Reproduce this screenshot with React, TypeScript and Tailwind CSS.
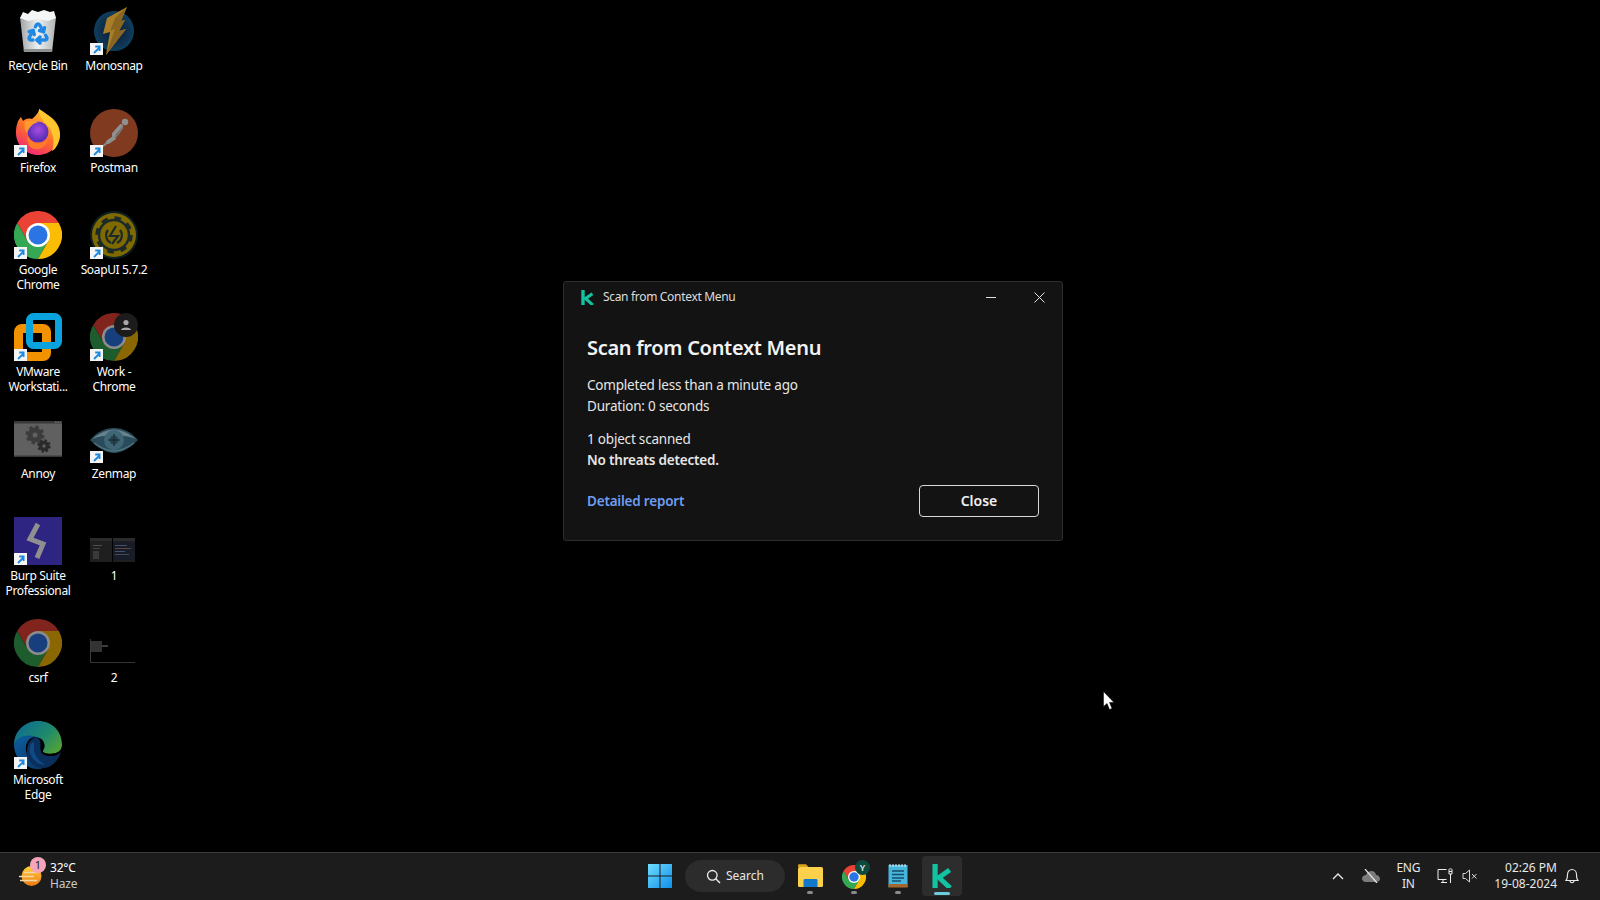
import React from "react";
import { Recycle } from "lucide-react";

const SANS = "font-['Noto_Sans','Open_Sans',sans-serif]";

function ChromeSvg({ size = 48 }: { size?: number }) {
  return (
    <svg width={size} height={size} viewBox="0 0 48 48">
      <path d="M3.2 12A24 24 0 0 1 44.8 12H24L13.6 30Z" fill="#ea4335" />
      <path d="M3.2 12A24 24 0 0 0 24 48L34.4 30H13.6Z" fill="#34a853" />
      <path d="M24 48A24 24 0 0 0 44.8 12H24L34.4 30Z" fill="#fbbc04" />
      <circle cx="24" cy="24" r="12" fill="#fff" />
      <circle cx="24" cy="24" r="9.5" fill="#2b74e4" />
    </svg>
  );
}

function Shortcut() {
  return (
    <span className="absolute left-0 bottom-0 w-[13px] h-[12px] bg-[#f4f4f4] flex items-center justify-center">
      <svg width="9" height="9" viewBox="0 0 9 9">
        <path d="M2 8 7 3M3.2 1.5H7.6V6" fill="none" stroke="#1d8ae0" strokeWidth="1.8" />
      </svg>
    </span>
  );
}

const RecycleBin = () => (
  <div className="relative w-12 h-12">
    <svg width="48" height="48" viewBox="0 0 48 48">
      <defs>
        <linearGradient id="rb" x1="0" x2="1">
          <stop offset="0" stopColor="#9fa4a6" />
          <stop offset="0.5" stopColor="#eef1f2" />
          <stop offset="1" stopColor="#aeb2b3" />
        </linearGradient>
      </defs>
      <path d="M6 10 10 45H38L42 10Z" fill="url(#rb)" />
      <path d="M10 45H38L38.400 42H9.600Z" fill="#8d9192" />
      <path d="M6 11 9 5 14 7 18 3 24 5 30 3 36 5 40 4 42 11 34 14 24 12 14 14Z" fill="#f5f6f6" />
    </svg>
    <Recycle className="absolute left-[12px] top-[14px]" size={24} color="#1e88e5" strokeWidth={3.4} />
  </div>
);

const Monosnap = () => (
  <svg width="48" height="48" viewBox="0 0 48 48">
    <defs>
      <radialGradient id="ms">
        <stop offset="0" stopColor="#0b1a33" />
        <stop offset="0.7" stopColor="#10314f" />
        <stop offset="1" stopColor="#0e3f5f" />
      </radialGradient>
    </defs>
    <circle cx="24" cy="24" r="20" fill="url(#ms)" />
    <path d="M37 0 17 11 13 27 20 25 16 48 36 22 29 24 35 13 31 14Z" fill="#a87e28" />
    <path d="M37 0 31 14 35 13 29 24 36 22 16 48 25 22 20 24 25 11Z" fill="#8a6520" />
  </svg>
);

const Firefox = () => (
  <svg width="48" height="48" viewBox="0 0 48 48">
    <defs>
      <linearGradient id="ff" x1="0.8" y1="0.1" x2="0.3" y2="1">
        <stop offset="0" stopColor="#ffc02e" />
        <stop offset="0.55" stopColor="#ff6a2b" />
        <stop offset="1" stopColor="#f0267a" />
      </linearGradient>
      <radialGradient id="ffp" cx="0.5" cy="0.4">
        <stop offset="0" stopColor="#a64ce0" />
        <stop offset="1" stopColor="#5b2fb8" />
      </radialGradient>
    </defs>
    <path d="M2 24C2 16 4 11 7 8L9 12C11 10 14 9 18 10 22 7 25 3 25 0 30 4 33 5 38 9 44 14 46 20 46 25 46 37 36 46 24 46 12 46 2 36 2 24Z" fill="url(#ff)" />
    <path d="M25 0C33 5 44 12 46 25 46 33 42 40 38 42 41 34 40 22 32 15 28 11 25 5 25 0Z" fill="#ffc72e" />
    <circle cx="24" cy="23" r="10.500" fill="url(#ffp)" />
    <path d="M11 13C15 11 21 12 25 13 19 14 15 18 13 24 10 21 10 17 11 13Z" fill="#ff9a2e" />
    <path d="M14 27C17 35 27 36 34 30 33 36 28 41 21 40 15 39 12 33 14 27Z" fill="#ff7a2a" />
  </svg>
);

const Postman = () => (
  <svg width="48" height="48" viewBox="0 0 48 48">
    <circle cx="24" cy="24" r="24" fill="#7f3a20" />
    <circle cx="35" cy="13" r="3.200" fill="#8f8f8f" />
    <path d="M31 17 24 25 24 29 18 33" stroke="#8f8f8f" strokeWidth="4" fill="none" strokeLinecap="round" />
    <path d="M25 29 29 24 33 18" stroke="#767676" strokeWidth="1.800" fill="none" />
    <path d="M18 33 12 38" stroke="#8b8b8b" strokeWidth="2" />
  </svg>
);

const SoapUI = () => (
  <svg width="48" height="48" viewBox="0 0 48 48">
    <circle cx="24" cy="24" r="24" fill="#0d1f22" />
    <circle cx="24" cy="24" r="22" fill="#7f6a00" />
    <circle cx="24" cy="24" r="15" fill="none" stroke="#1d2a2a" strokeWidth="2.500" />
    <circle cx="24" cy="24" r="17" fill="none" stroke="#1d2a2a" strokeWidth="3.500" strokeDasharray="6.500 6.850" />
    <path d="M18 19A8.500 8.500 0 0 0 21 32M30 19A8.500 8.500 0 0 1 27 32" fill="none" stroke="#1d2a2a" strokeWidth="2.200" />
    <path d="M26 15 20 25H28L22 33" fill="none" stroke="#1d2a2a" strokeWidth="2.200" />
  </svg>
);

const VMware = () => (
  <svg width="48" height="48" viewBox="0 0 48 48">
    <rect x="4.500" y="15.500" width="28" height="28" rx="3.500" fill="none" stroke="#f39200" strokeWidth="9" />
    <rect x="15.500" y="3.500" width="29" height="29" rx="4" fill="none" stroke="#0ba3de" strokeWidth="7" />
  </svg>
);

const WorkChrome = () => (
  <div className="relative w-12 h-12">
    <div className="opacity-55">
      <ChromeSvg />
    </div>
    <svg className="absolute left-0 top-0" width="48" height="48" viewBox="0 0 48 48">
      <circle cx="36" cy="12" r="12" fill="#1c1c1c" />
      <circle cx="36" cy="9.500" r="2.600" fill="#a8a8a8" />
      <path d="M31 17C31 13.500 41 13.500 41 17Z" fill="#a8a8a8" />
    </svg>
  </div>
);

const Annoy = () => (
  <svg width="48" height="48" viewBox="0 0 48 48">
    <rect x="0" y="6" width="48" height="36" fill="#606060" />
    <rect x="0" y="6" width="48" height="2.500" fill="#383838" />
    <rect x="0" y="40.500" width="48" height="1.500" fill="#383838" />
    <circle cx="21" cy="20" r="5" fill="none" stroke="#3c3c3c" strokeWidth="5" />
    <circle cx="21" cy="20" r="8" fill="none" stroke="#3c3c3c" strokeWidth="3" strokeDasharray="3.400 2.900" />
    <circle cx="30" cy="31" r="3.500" fill="none" stroke="#2a2a2a" strokeWidth="3.500" />
    <circle cx="30" cy="31" r="5.500" fill="none" stroke="#2a2a2a" strokeWidth="2.500" strokeDasharray="2.300 2" />
    <path d="M41 7.200H42.500M43.500 7.200H45M46 7.200H47" stroke="#888" />
  </svg>
);

const Zenmap = () => (
  <svg width="48" height="48" viewBox="0 0 48 48">
    <path d="M0 25C8 16 16 13 24 13 32 13 40 16 48 25 40 33 32 38 24 38 16 38 8 33 0 25Z" fill="#2a4c5a" />
    <path d="M2 24C10 18 17 14.500 24 14.500 31 14.500 38 18 46 24 38 21 31 20 24 20 17 20 10 21 2 24Z" fill="#66828d" />
    <circle cx="24" cy="25" r="10" fill="#3f6675" />
    <circle cx="24" cy="25" r="4.500" fill="#2a4452" />
    <path d="M24 19V31M18 25H30" stroke="#16262c" />
    <path d="M4 28C11 33 17 36 24 36 31 36 37 33 44 28" fill="none" stroke="#4f7382" strokeWidth="1.500" />
  </svg>
);

const Burp = () => (
  <svg width="48" height="48" viewBox="0 0 48 48">
    <rect width="48" height="48" fill="#2e2482" />
    <path d="M24 7 16 22 29 27 23 41" fill="none" stroke="#8f8f8f" strokeWidth="5" />
  </svg>
);

const Thumb1 = () => (
  <svg width="48" height="48" viewBox="0 0 48 48">
    <rect x="0" y="21" width="45" height="24" fill="#1f1f20" />
    <rect x="0" y="21" width="45" height="3" fill="#2c2c2e" />
    <rect x="3" y="28" width="9" height="1" fill="#505050" />
    <rect x="3" y="31" width="7" height="1" fill="#444" />
    <rect x="3" y="34" width="6" height="8" fill="#3a3a3a" />
    <rect x="22" y="21" width="1" height="24" fill="#000" />
    <rect x="23" y="25" width="22" height="18" fill="#181c26" />
    <rect x="25" y="28" width="12" height="1" fill="#46506a" />
    <rect x="25" y="31" width="16" height="1" fill="#5a4640" />
    <rect x="25" y="34" width="10" height="1" fill="#46506a" />
    <rect x="25" y="37" width="14" height="1" fill="#3f4a5c" />
  </svg>
);

const Thumb2 = () => (
  <svg width="48" height="48" viewBox="0 0 48 48">
    <rect x="0" y="20" width="1" height="24" fill="#3a3a3a" />
    <rect x="1" y="22" width="11" height="11" fill="#333" />
    <rect x="12" y="26" width="6" height="2" fill="#3d3d3d" />
    <rect x="0" y="43" width="45" height="1" fill="#333" />
  </svg>
);

const Edge = () => (
  <svg width="48" height="48" viewBox="0 0 48 48">
    <defs>
      <linearGradient id="eg" x1="0.1" y1="0.1" x2="1" y2="0.7">
        <stop offset="0" stopColor="#0f6d92" />
        <stop offset="0.6" stopColor="#1f8a6b" />
        <stop offset="1" stopColor="#4fa03b" />
      </linearGradient>
      <linearGradient id="eb" x1="0" y1="0" x2="0.7" y2="1">
        <stop offset="0" stopColor="#0c5fa0" />
        <stop offset="1" stopColor="#0a3b6e" />
      </linearGradient>
    </defs>
    <path d="M0 24C0 10 11 0 24 0 38 0 48 10 48 24 48 30 42 33 37 33 31 33 28 31 29 29 32 26 30 17 22 16 12 15 3 17 0 24Z" fill="url(#eg)" />
    <path d="M0 24C3 14 15 13 22 16 15 16 11 22 12 30 13 38 20 46 29 47 27 48 26 48 24 48 11 48 0 37 0 24Z" fill="url(#eb)" />
    <path d="M22 16C30 17 32 26 29 29 25 30 28 35 37 35 40 35 44 34 47 31 44 41 36 48 27 47 18 46 12 38 13 30 13 23 16 18 22 16Z" fill="#0a2f5c" />
    <path d="M20 21C16 22 15 27 16 32 18 38 24 44 31 44 25 40 20 34 20 28Z" fill="#0d4a86" />
    <path d="M24 17C30 18 32 24 29.500 28.500 27 31 30 35 37 35 41 35 45 33 47 30 42 33 30 34 27 30 25 27 29 22 24 17Z" fill="#000" />
  </svg>
);

type Item = { label: string[]; icon: React.ReactNode; link?: boolean };

const items: Item[] = [
  { label: ["Recycle Bin"], icon: <RecycleBin /> },
  { label: ["Monosnap"], icon: <Monosnap />, link: true },
  { label: ["Firefox"], icon: <Firefox />, link: true },
  { label: ["Postman"], icon: <Postman />, link: true },
  { label: ["Google", "Chrome"], icon: <ChromeSvg />, link: true },
  { label: ["SoapUI 5.7.2"], icon: <SoapUI />, link: true },
  { label: ["VMware", "Workstati..."], icon: <VMware />, link: true },
  { label: ["Work -", "Chrome"], icon: <WorkChrome />, link: true },
  { label: ["Annoy"], icon: <Annoy /> },
  { label: ["Zenmap"], icon: <Zenmap />, link: true },
  { label: ["Burp Suite", "Professional"], icon: <Burp />, link: true },
  { label: ["1"], icon: <Thumb1 /> },
  { label: ["csrf"], icon: <div className="opacity-55"><ChromeSvg /></div> },
  { label: ["2"], icon: <Thumb2 /> },
  { label: ["Microsoft", "Edge"], icon: <Edge />, link: true },
];

function DesktopIcon({ item }: { item: Item }) {
  return (
    <div className="flex flex-col items-center pt-[7px]">
      <div className="relative w-12 h-12">
        {item.icon}
        {item.link && <Shortcut />}
      </div>
      <div className="mt-[3px] text-[12px] leading-[15px] text-white text-center tracking-[-0.35px] whitespace-nowrap">
        {item.label.map((l) => (
          <div key={l}>{l}</div>
        ))}
      </div>
    </div>
  );
}

function KLogo({ w, h }: { w: number; h: number }) {
  return (
    <svg width={w} height={h} viewBox="0 0 13 16" preserveAspectRatio="none">
      <path d="M2 0V16" stroke="#12c2a0" strokeWidth="3.400" fill="none" />
      <path d="M11.500 4 4.500 9 11.800 16" stroke="#12c2a0" strokeWidth="3.200" fill="none" />
    </svg>
  );
}

function ScanWindow() {
  return (
    <div className="absolute left-[563px] top-[281px] w-[500px] h-[260px] bg-[#131313] border border-[#2c2c2c] rounded-[3px] flex flex-col">
      <div className="h-[30px] flex items-center pl-[17px] shrink-0">
        <KLogo w={13} h={15} />
        <span className="ml-[9px] text-[12px] tracking-[-0.32px] text-[#dddddd]">Scan from Context Menu</span>
        <div className="ml-auto flex items-center">
          <svg width="10" height="10" viewBox="0 0 10 10" className="mr-[38px]">
            <path d="M0 5.500H10" stroke="#e0e0e0" />
          </svg>
          <svg width="11" height="11" viewBox="0 0 11 11" className="mr-[17px]">
            <path d="M.5.5 10.500 10.500M10.500.5.5 10.500" stroke="#e0e0e0" />
          </svg>
        </div>
      </div>
      <div className="flex-1 pl-[23px] pr-[23px] flex flex-col">
        <h1 className="mt-[22px] text-[20px] leading-[28px] font-semibold tracking-[-0.3px] text-[#f2f2f2]">Scan from Context Menu</h1>
        <div className="mt-[13px] text-[13.5px] tracking-[-0.2px] leading-[21px] text-[#e6e6e6]">
          <p>Completed less than a minute ago</p>
          <p>Duration: 0 seconds</p>
        </div>
        <div className="mt-[12px] text-[13.5px] tracking-[-0.2px] leading-[21px] text-[#e6e6e6]">
          <p>1 object scanned</p>
          <p className="font-semibold">No threats detected.</p>
        </div>
        <div className="mt-[14px] flex items-center justify-between">
          <span className="text-[13.5px] tracking-[-0.2px] font-semibold text-[#6f9df0]">Detailed report</span>
          <button className="w-[120px] h-[32px] rounded-[4px] border border-[#d8d8d8] text-[14px] leading-[20px] pb-[1px] font-semibold text-[#f0f0f0]">
            Close
          </button>
        </div>
      </div>
    </div>
  );
}

const Dot = () => <span className="absolute bottom-[2px] left-1/2 -translate-x-1/2 w-[6px] h-[3px] rounded-full bg-[#8a8a8a]" />;

function TaskButton({ children, dot = true }: { children: React.ReactNode; dot?: boolean }) {
  return (
    <div className="relative w-[40px] h-[40px] flex items-center justify-center">
      {children}
      {dot && <Dot />}
    </div>
  );
}

function Taskbar() {
  return (
    <div className="h-[48px] shrink-0 pb-[1px] bg-[#1c1c1c] border-t border-[#3c3c3c] flex items-center text-white">
      <div className="w-[630px] shrink-0 flex items-center pl-[19px]">
        <div className="relative w-[24px] h-[24px]">
          <svg width="24" height="24" viewBox="0 0 24 24">
            <defs>
              <linearGradient id="sun" x1="0" y1="0" x2="0" y2="1">
                <stop offset="0" stopColor="#ffd23c" />
                <stop offset="1" stopColor="#ee7a12" />
              </linearGradient>
            </defs>
            <circle cx="12.500" cy="12" r="10" fill="url(#sun)" />
            <path d="M5 8.500H18M0 12.500H15M1 16.500H18" stroke="#f2d8a8" strokeWidth="1.600" />
          </svg>
          <span className="absolute left-[11px] top-[-7px] w-[16px] h-[16px] rounded-full bg-[#f6a5b8] text-[#1c1c1c] text-[11px] leading-[16px] text-center">1</span>
        </div>
        <div className="ml-[7px] text-[12px] leading-[16px] tracking-[-0.2px]">
          <div>32°C</div>
          <div className="text-[#c8c8c8]">Haze</div>
        </div>
      </div>
      <div className="flex items-center">
        <div className="w-[36px] h-[40px] flex items-center justify-center ml-[12px]">
          <svg width="24" height="24" viewBox="0 0 24 24">
            <defs>
              <linearGradient id="win" x1="0" y1="0" x2="1" y2="1">
                <stop offset="0" stopColor="#6fdcff" />
                <stop offset="1" stopColor="#0f8fe8" />
              </linearGradient>
            </defs>
            <path d="M0 0H11.500V11.500H0ZM12.500 0H24V11.500H12.500ZM0 12.500H11.500V24H0ZM12.500 12.500H24V24H12.500Z" fill="url(#win)" />
          </svg>
        </div>
        <div className="ml-[7px] w-[100px] h-[32px] rounded-full bg-[#2c2c2c] flex items-center justify-center gap-[5px]">
          <svg width="15" height="15" viewBox="0 0 15 15">
            <circle cx="6.300" cy="6.300" r="4.800" fill="none" stroke="#eee" strokeWidth="1.300" />
            <path d="M9.800 9.800 14 14" stroke="#eee" strokeWidth="1.400" />
          </svg>
          <span className="text-[12px] text-[#e6e6e6]">Search</span>
        </div>
        <div className="ml-[5px]">
          <TaskButton>
            <svg width="25" height="24" viewBox="0 0 25 24">
              <path d="M0 1.500C0 .8.6.3 1.300.3H8L10.500 3H0Z" fill="#d9a21b" />
              <rect x="0" y="3" width="25" height="20" rx="1.500" fill="#fbd04a" />
              <path d="M7 15H18C19 15 19.500 15.600 19.500 16.500V23H5.500V16.500C5.500 15.600 6 15 7 15Z" fill="#1278c9" />
            </svg>
          </TaskButton>
        </div>
        <div className="ml-[4px]">
          <TaskButton>
            <div className="relative w-[24px] h-[24px] mt-[2px]">
              <ChromeSvg size={24} />
              <span className="absolute left-[13px] top-[-5px] w-[15px] h-[15px] rounded-full bg-[#0c4a3e] text-[#e8e8e8] text-[9px] leading-[15px] text-center font-semibold">Y</span>
            </div>
          </TaskButton>
        </div>
        <div className="ml-[4px]">
          <TaskButton>
            <svg width="20" height="24" viewBox="0 0 20 24">
              <rect x="0.500" y="1" width="19" height="22" fill="#47b6de" />
              <rect x="0.500" y="20" width="19" height="3.500" fill="#a5682a" />
              <path d="M4 7H16M4 10.500H16M4 14H16M4 17H13" stroke="#134e68" strokeWidth="1.500" />
              <path d="M2 0V3M5 0V3M8 0V3M11 0V3M14 0V3M17 0V3" stroke="#dff3fb" />
            </svg>
          </TaskButton>
        </div>
        <div className="ml-[4px] relative w-[40px] h-[40px] rounded-[4px] bg-[#2d2d2d] flex items-center justify-center">
          <div className="-mt-[1px]">
            <KLogo w={20} h={24} />
          </div>
          <span className="absolute bottom-[1px] left-[12px] w-[16px] h-[3px] rounded-full bg-[#6ccbdc]" />
        </div>
      </div>
      <div className="flex-1 flex items-center justify-end relative h-full text-[#e8e8e8]">
        <svg width="12" height="8" viewBox="0 0 12 8" className="mr-[18px]">
          <path d="M1 7 6 2 11 7" fill="none" stroke="#e8e8e8" strokeWidth="1.400" />
        </svg>
        <svg width="18" height="14" viewBox="0 0 18 14" className="mr-[13px]">
          <path d="M4 13C1 13 0 11 0 9.500 0 7.500 2 6 4 6 5 3 7 2 9.500 2 12 2 14 4 14 6 16.500 6 18 8 18 10 18 12 16 13 14 13Z" fill="#7c7c7c" />
          <path d="M3 0 15 14" stroke="#e8e8e8" strokeWidth="1.200" />
        </svg>
        <div className="w-[30px] text-center text-[12px] leading-[16px] tracking-[-0.2px] mr-[14px]">
          <div>ENG</div>
          <div>IN</div>
        </div>
        <svg width="16" height="16" viewBox="0 0 16 16" className="mr-[9px]">
          <path d="M9.500 11.500H1V1.500H9.500M4 14.500H10M6 11.500V14.500" fill="none" stroke="#eee" />
          <path d="M12 1.500C12 .5 15 .5 15 1.500V6H12ZM12 3.500H15M13.500 6V15" fill="none" stroke="#eee" />
        </svg>
        <svg width="16" height="14" viewBox="0 0 16 14" className="mr-[16px]">
          <path d="M1 4.500H3.500L7.500 1V13L3.500 9.500H1Z" fill="none" stroke="#d8d8d8" />
          <path d="M10 5 14.500 9.500M14.500 5 10 9.500" stroke="#d8d8d8" />
        </svg>
        <div className="text-right text-[12px] leading-[16px] mr-[8px]">
          <div>02:26 PM</div>
          <div>19-08-2024</div>
        </div>
        <svg width="14" height="16" viewBox="0 0 14 16" className="mr-[21px]">
          <path d="M1 12.500C2.500 11 2.500 9 2.500 6.500 2.500 3.500 4.500 1.500 7 1.500 9.500 1.500 11.500 3.500 11.500 6.500 11.500 9 11.500 11 13 12.500ZM5 12.500C5 15.500 9 15.500 9 12.500" fill="none" stroke="#e8e8e8" strokeWidth="1.100" />
        </svg>
      </div>
    </div>
  );
}

export default function App() {
  return (
    <div className={`w-[1600px] h-[900px] overflow-hidden bg-black flex flex-col ${SANS}`}>
      <div className="relative flex-1">
        <div className="grid grid-cols-[76px_76px] auto-rows-[102px] w-[152px]">
          {items.map((it) => (
            <DesktopIcon key={it.label.join()} item={it} />
          ))}
        </div>
        <ScanWindow />
        <svg className="absolute left-[1103px] top-[691px]" width="12" height="20" viewBox="0 0 12 20">
          <path d="M.5.5V15.500L4 12.500 6.500 18.500 9 17.500 6.500 11.500H11Z" fill="#fff" stroke="#000" strokeWidth=".5" />
        </svg>
      </div>
      <Taskbar />
    </div>
  );
}
